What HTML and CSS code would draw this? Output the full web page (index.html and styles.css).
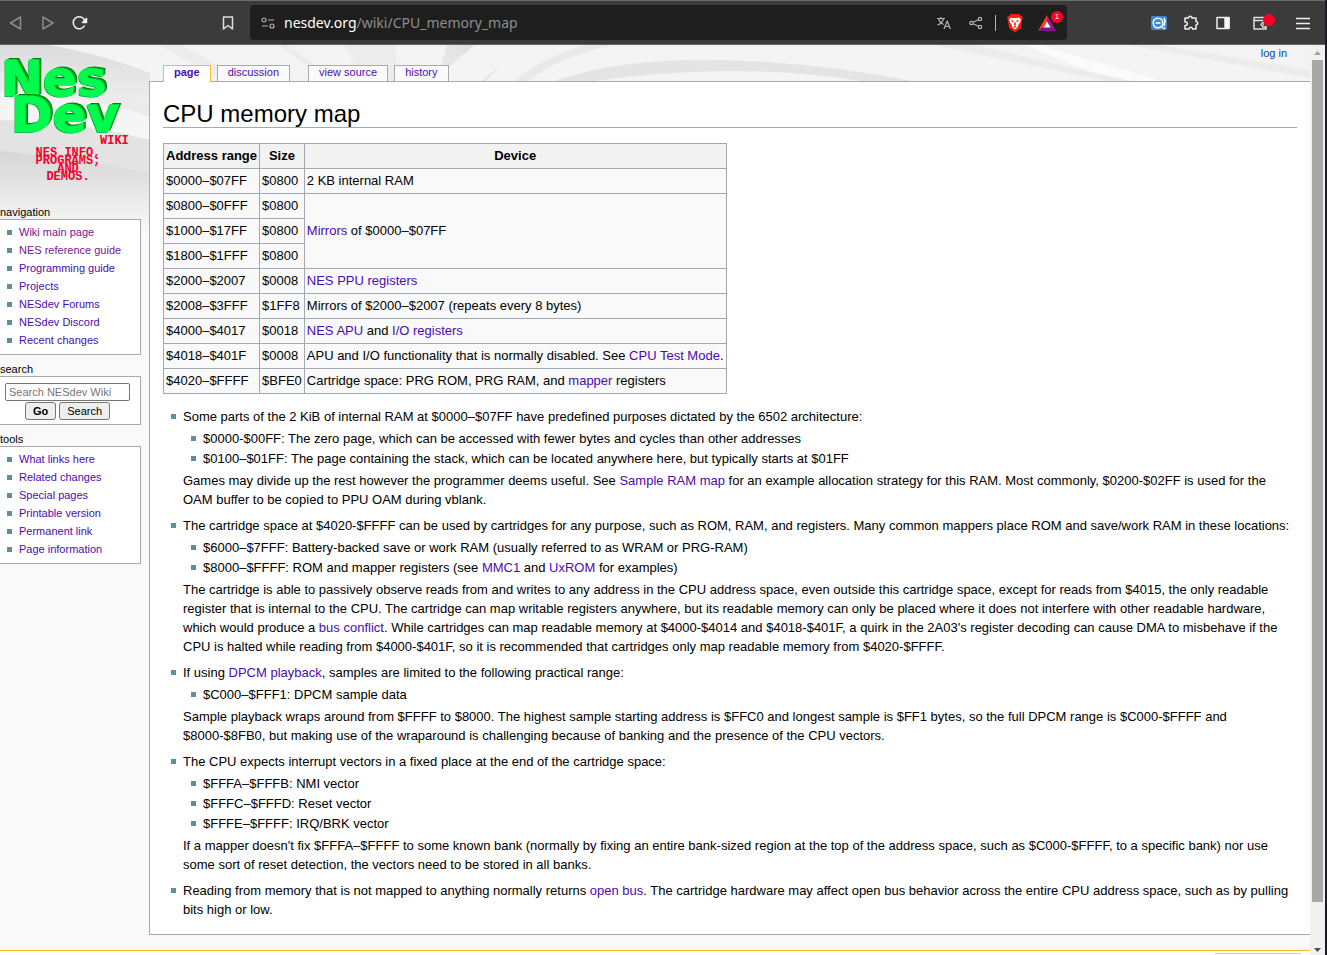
FILE: index.html
```html
<!DOCTYPE html>
<html lang="en">
<head>
<meta charset="utf-8">
<title>CPU memory map - NESdev Wiki</title>
<link rel="stylesheet" href="styles.css">
</head>
<body>
<div class="window">
  <header class="toolbar">
    <div class="tool-group">
      <button class="tool dim" aria-label="Back"><svg width="16" height="16" viewBox="0 0 16 16"><path d="M12.500 2v12L2.500 8z"/></svg></button>
      <button class="tool dim" aria-label="Forward"><svg width="16" height="16" viewBox="0 0 16 16"><path d="M3 2v12l10-6z"/></svg></button>
      <button class="tool bright" aria-label="Reload"><svg width="16" height="16" viewBox="0 0 16 16"><path d="M12.600 10.500A6 6 0 1 1 12.800 5.500"/><path fill="#f0f0f0" d="M14.500 3.500v4h-4z"/></svg></button>
    </div>
    <button class="tool bookmark" aria-label="Bookmark"><svg width="16" height="16" viewBox="0 0 16 16"><path d="M3.500 2h9v12L8 10.500 3.500 14z"/></svg></button>
    <div class="address">
      <svg class="site" width="14" height="14" viewBox="0 0 14 14"><circle cx="3" cy="4" r="2"/><circle cx="11" cy="10" r="2"/><path d="M7 4h6M1 10h6"/></svg>
      <a class="url" href="#">nesdev.org<span class="path">/wiki/CPU_memory_map</span></a>
      <button class="tool" aria-label="Translate"><svg width="16" height="16" viewBox="0 0 16 16"><path d="M1 3.500h8M5 2v1.500M2.500 4c1 3 3 4.500 5 5.500M7.500 4c-1 3-3 5-6 6M8 14l3.200-8 3.200 8M9 11.500h4.400"/></svg></button>
      <button class="tool" aria-label="Share"><svg width="14" height="14" viewBox="0 0 14 14"><circle cx="2.500" cy="7" r="1.700"/><circle cx="11" cy="3" r="1.700"/><circle cx="11" cy="11" r="1.700"/><path d="M4 6.300l5.400-2.600M4 7.700l5.400 2.600"/></svg></button>
      <span class="divider"></span>
      <button class="tool shield" aria-label="Brave Shields"><svg width="18" height="20" viewBox="0 0 18 20"><path fill="#fa1e0e" d="M5 1h8l2 2 2 1-1 4-1 7-6 4.500L3 15 2 8 1 4l2-1z"/><path fill="#fff" d="M5 4.500l2 .5h4l2-.500 2 2-1 3-1.500 2-1 3L9 16.500 6.500 14.500l-1-3L4 9.500l-1-3z"/><path fill="#fa1e0e" d="M5 7l3 1-1.500 1.500zM13 7l-3 1 1.500 1.500zM8.500 9h1l.5 3-1 1-1-1zM7 14l2-1 2 1-2 .700z"/></svg></button>
      <button class="tool rewards" aria-label="Rewards"><svg width="24" height="20" viewBox="0 0 24 20"><path fill="#ff3b21" d="M11 2L2 18l6-4 3-5z"/><path fill="#ad1289" d="M11 2l9 16-6-4-3-5z"/><path fill="#7a168c" d="M2 18h18l-5-4H7z"/><path fill="#fff" d="M11 8.500l3.500 6h-7z"/></svg><span class="count">1</span></button>
    </div>
    <div class="tool-group extensions">
      <button class="tool bright" aria-label="Extension"><svg width="16" height="14" viewBox="0 0 16 14"><rect width="16" height="14" rx="2" fill="#4288cf" stroke="none"/><circle cx="7" cy="7" r="4.800" fill="none" stroke="#fff"/><path d="M4.500 7h5M11 11l3 2M13 2l1 3-1 5" stroke="#fff"/></svg></button>
      <button class="tool bright" aria-label="Extensions"><svg width="16" height="16" viewBox="0 0 16 16"><path d="M2 3h3.500a1.700 1.700 0 1 1 3.400 0H13v3.500a1.700 1.700 0 1 1 0 3.400V14H9.500a1.700 1.700 0 1 0-3.400 0H2v-3.600a1.800 1.800 0 1 0 0-3.400z"/></svg></button>
      <button class="tool bright" aria-label="Sidebar"><svg width="14" height="14" viewBox="0 0 14 14"><rect x="1" y="1.500" width="12" height="11"/><path d="M9 2h4v10H9z" fill="#fff"/></svg></button>
      <button class="tool wallet" aria-label="Wallet"><svg width="24" height="20" viewBox="0 0 24 20"><path d="M15 7V4.500H3V16h12v-2M3 7.500H15M16 9.500h-4L10 11.500l2 2.500h4M12 11.500h1"/><circle cx="18" cy="7" r="6" fill="#ff0022" stroke="none"/></svg></button>
      <button class="tool bright menu" aria-label="Menu"><svg width="14" height="14" viewBox="0 0 14 14"><path d="M0 2.500h14M0 7.500h14M0 12.500h14"/></svg></button>
    </div>
  </header>

  <div class="viewport">
    <div class="page">
      <svg class="backdrop" width="1310" height="190" viewBox="0 0 1310 190" aria-hidden="true">
        <defs>
          <linearGradient id="fade" x1="0" y1="0" x2="0" y2="1"><stop offset="0" stop-color="#f3f3f3"/><stop offset="1" stop-color="#f9f9f9"/></linearGradient>
          <linearGradient id="low" x1="0" y1="0" x2="0" y2="1"><stop offset="0" stop-color="#d6d6d6"/><stop offset="1" stop-color="#f9f9f9"/></linearGradient>
          <linearGradient id="band" x1="0" y1="0" x2="0" y2="1"><stop offset="0" stop-color="#dcdcdc"/><stop offset="1" stop-color="#eeeeee"/></linearGradient>
          <linearGradient id="leaf" x1="0" y1="1" x2="1" y2="0"><stop offset="0" stop-color="#efefef"/><stop offset="1" stop-color="#dedede"/></linearGradient>
        </defs>
        <path fill="url(#fade)" d="M0 0h1310v190H0z"/>
        <path fill="url(#band)" d="M0 0h50q60 12 100 28v32Q70 30 0 28z"/>
        <path fill="#ebebeb" d="M0 28q90 6 150 32v12Q90 50 0 46z"/>
        <path fill="#e3e3e3" d="M0 75q80 2 150 20v42Q70 115 0 107z"/>
        <path fill="url(#low)" d="M0 106q80 8 150 22v62H0z"/>
        <path fill="#ececec" d="M160 0h20l70 37h-25zM345 0h50l3 37h-35zM280 0h8l50 37h-12z"/>
        <path fill="url(#leaf)" d="M447 0h27l-26 23-12 14z"/>
        <path fill="#e9e9e9" d="M585 0h25q-55 14-83 37h-14Q545 11 585 0z"/>
        <path fill="#e0e0e0" d="M501 20l-16 16h-3z"/>
        <path fill="#e4e4e4" d="M552 37q60-22 150-22 105 0 215 22h-50q-130-22-280 0z"/>
        <path fill="#fbfbfb" d="M1025 0h15l125 37h-50z"/>
        <path fill="#ececec" d="M935 0h40l160 37h-25zM1130 0h30l150 25v8z"/>
      </svg>

      <aside class="sidebar">
        <a class="logo" href="#">
          <span class="word">Nes</span>
          <span class="word shifted">Dev</span>
          <span class="wiki">WIKI</span>
          <span class="tagline">NES INFO,<br>PROGRAMS;<br>AND<br>DEMOS.</span>
        </a>
        <nav class="portlet">
          <h2>navigation</h2>
          <ul class="box links">
            <li><a class="visited" href="#">Wiki main page</a></li>
            <li><a class="visited" href="#">NES reference guide</a></li>
            <li><a href="#">Programming guide</a></li>
            <li><a href="#">Projects</a></li>
            <li><a href="#">NESdev Forums</a></li>
            <li><a href="#">NESdev Discord</a></li>
            <li><a href="#">Recent changes</a></li>
          </ul>
        </nav>
        <section class="portlet">
          <h2><label for="search">search</label></h2>
          <form class="box search">
            <input id="search" type="text" placeholder="Search NESdev Wiki">
            <div class="actions"><button type="button" class="go">Go</button><button type="button">Search</button></div>
          </form>
        </section>
        <nav class="portlet">
          <h2>tools</h2>
          <ul class="box links">
            <li><a href="#">What links here</a></li>
            <li><a href="#">Related changes</a></li>
            <li><a href="#">Special pages</a></li>
            <li><a href="#">Printable version</a></li>
            <li><a href="#">Permanent link</a></li>
            <li><a href="#">Page information</a></li>
          </ul>
        </nav>
      </aside>

      <div class="column">
        <div class="personal"><a href="#">log in</a></div>
        <nav class="tabs">
          <a class="selected" href="#">page</a>
          <a href="#">discussion</a>
          <a class="views" href="#">view source</a>
          <a href="#">history</a>
        </nav>
        <main class="content">
          <h1>CPU memory map</h1>
          <table>
            <thead><tr><th>Address range</th><th>Size</th><th>Device</th></tr></thead>
            <tbody>
              <tr><td>$0000–$07FF</td><td>$0800</td><td>2 KB internal RAM</td></tr>
              <tr><td>$0800–$0FFF</td><td>$0800</td><td rowspan="3"><a href="#">Mirrors</a> of $0000–$07FF</td></tr>
              <tr><td>$1000–$17FF</td><td>$0800</td></tr>
              <tr><td>$1800–$1FFF</td><td>$0800</td></tr>
              <tr><td>$2000–$2007</td><td>$0008</td><td><a href="#">NES PPU registers</a></td></tr>
              <tr><td>$2008–$3FFF</td><td>$1FF8</td><td>Mirrors of $2000–$2007 (repeats every 8 bytes)</td></tr>
              <tr><td>$4000–$4017</td><td>$0018</td><td><a href="#">NES APU</a> and <a href="#">I/O registers</a></td></tr>
              <tr><td>$4018–$401F</td><td>$0008</td><td>APU and I/O functionality that is normally disabled. See <a href="#">CPU Test Mode</a>.</td></tr>
              <tr><td>$4020–$FFFF</td><td>$BFE0</td><td>Cartridge space: PRG ROM, PRG RAM, and <a href="#">mapper</a> registers</td></tr>
            </tbody>
          </table>
          <ul class="notes">
            <li>Some parts of the 2 KiB of internal RAM at $0000–$07FF have predefined purposes dictated by the 6502 architecture:
              <ul>
                <li>$0000-$00FF: The zero page, which can be accessed with fewer bytes and cycles than other addresses</li>
                <li>$0100–$01FF: The page containing the stack, which can be located anywhere here, but typically starts at $01FF</li>
              </ul>
              Games may divide up the rest however the programmer deems useful. See <a href="#">Sample RAM map</a> for an example allocation strategy for this RAM. Most commonly, $0200-$02FF is used for the OAM buffer to be copied to PPU OAM during vblank.</li>
            <li>The cartridge space at $4020-$FFFF can be used by cartridges for any purpose, such as ROM, RAM, and registers. Many common mappers place ROM and save/work RAM in these locations:
              <ul>
                <li>$6000–$7FFF: Battery-backed save or work RAM (usually referred to as WRAM or PRG-RAM)</li>
                <li>$8000–$FFFF: ROM and mapper registers (see <a href="#">MMC1</a> and <a href="#">UxROM</a> for examples)</li>
              </ul>
              The cartridge is able to passively observe reads from and writes to any address in the CPU address space, even outside this cartridge space, except for reads from $4015, the only readable register that is internal to the CPU. The cartridge can map writable registers anywhere, but its readable memory can only be placed where it does not interfere with other readable hardware, which would produce a <a href="#">bus conflict</a>. While cartridges can map readable memory at $4000-$4014 and $4018-$401F, a quirk in the 2A03's register decoding can cause DMA to misbehave if the CPU is halted while reading from $4000-$401F, so it is recommended that cartridges only map readable memory from $4020-$FFFF.</li>
            <li>If using <a href="#">DPCM playback</a>, samples are limited to the following practical range:
              <ul>
                <li>$C000–$FFF1: DPCM sample data</li>
              </ul>
              Sample playback wraps around from $FFFF to $8000. The highest sample starting address is $FFC0 and longest sample is $FF1 bytes, so the full DPCM range is $C000-$FFFF and $8000-$8FB0, but making use of the wraparound is challenging because of banking and the presence of the CPU vectors.</li>
            <li>The CPU expects interrupt vectors in a fixed place at the end of the cartridge space:
              <ul>
                <li>$FFFA–$FFFB: NMI vector</li>
                <li>$FFFC–$FFFD: Reset vector</li>
                <li>$FFFE–$FFFF: IRQ/BRK vector</li>
              </ul>
              If a mapper doesn't fix $FFFA–$FFFF to some known bank (normally by fixing an entire bank-sized region at the top of the address space, such as $C000-$FFFF, to a specific bank) nor use some sort of reset detection, the vectors need to be stored in all banks.</li>
            <li>Reading from memory that is not mapped to anything normally returns <a href="#">open bus</a>. The cartridge hardware may affect open bus behavior across the entire CPU address space, such as by pulling bits high or low.</li>
          </ul>
        </main>
      </div>
      <footer class="footer"><span class="badge"></span></footer>
    </div>
    <div class="scrollbar" aria-hidden="true">
      <svg width="15" height="15" viewBox="0 0 15 15"><path fill="#a3a3a3" d="M4 10h7L7.500 6z"/></svg>
      <span class="thumb"></span>
      <span class="rest"></span>
      <svg width="15" height="12" viewBox="0 0 15 12"><path fill="#505050" d="M4 5h7L7.500 9z"/></svg>
    </div>
  </div>
</div>
</body>
</html>
```

FILE: styles.css
```css
* { box-sizing: border-box; }

body {
  margin: 0;
  font-family: "Liberation Sans", Arial, sans-serif;
  font-size: 13px;
  line-height: 19px;
  color: #000;
}

a { color: #4b0bb0; text-decoration: none; }
a.visited { color: #7a1496; }
ul { list-style: none; margin: 0; padding: 0; }
button { font-family: inherit; }

.window {
  display: flex;
  flex-direction: column;
  height: 100vh;
  overflow: hidden;
  border-right: 2px solid #1c1c24;
}

/* Browser toolbar */
.toolbar {
  display: flex;
  align-items: center;
  flex: none;
  height: 45px;
  background: #3b3b3b;
  border-top: 1px solid #6a6d6c;
  border-bottom: 1px solid #636363;
}
.tool-group { display: flex; align-items: center; }
.tool {
  display: flex;
  align-items: center;
  justify-content: center;
  flex: none;
  width: 32px;
  height: 32px;
  padding: 0;
  border: 0;
  background: none;
}
.tool svg, .site { flex: none; fill: none; stroke: #b4b4b4; stroke-width: 1.2; stroke-linejoin: round; }
.tool.dim svg { stroke: #8c8c8c; stroke-width: 1.5; }
.tool.bright svg { stroke: #f0f0f0; stroke-width: 1.5; }
.tool.bookmark { margin: 0 6px 0 116px; }
.tool.bookmark svg { stroke: #ddd; stroke-width: 1.5; }
.address {
  display: flex;
  align-items: center;
  flex: 1;
  height: 35px;
  padding: 0 2px 0 11px;
  border-radius: 4px;
  background: #1e1e1e;
}
.url {
  flex: 1;
  margin-left: 9px;
  font: 14px/20px "Noto Sans", sans-serif;
  color: #fff;
}
.path { color: #8c8c8c; }
.divider { width: 1px; height: 16px; margin: 0 3px; background: #b4b4b4; }
.tool.shield svg, .tool.rewards svg { stroke: none; }
.rewards { position: relative; width: 34px; }
.count {
  position: absolute;
  top: 4px;
  right: 2px;
  width: 12px;
  height: 12px;
  border-radius: 6px;
  background: #ff0022;
  color: #fff;
  font-size: 8px;
  line-height: 12px;
}
.extensions { padding: 0 6px 0 76px; }
.wallet { width: 48px; }
.tool.wallet svg { stroke: #e0e0e0; stroke-width: 1.5; }

/* Page and scrollbar */
.viewport { display: flex; flex: 1; min-height: 0; }
.page {
  position: relative;
  display: grid;
  grid-template-columns: 149px 1fr;
  align-content: start;
  flex: 1;
  overflow: hidden;
  background: #f9f9f9;
}
.backdrop { position: absolute; top: 0; left: 0; }
.sidebar, .column { position: relative; }
.scrollbar {
  display: flex;
  flex-direction: column;
  width: 15px;
  background: #f1f1f1;
}
.scrollbar svg { flex: none; }
.thumb { flex: 842; margin: 0 2px; background: #a8a8a8; }
.rest { flex: 41; }

/* Sidebar */
.sidebar {
  display: flex;
  flex-direction: column;
  gap: 7px;
  font-size: 11px;
  line-height: 18px;
}
.logo {
  display: flex;
  flex-direction: column;
  height: 153px;
  padding-top: 16px;
  font-family: "DejaVu Sans", sans-serif;
  font-weight: bold;
}
.word {
  padding-left: 1px;
  font-size: 50px;
  line-height: 36px;
  color: #00fb4f;
  -webkit-text-stroke: 1px #00fb4f;
  text-shadow: 1px -1px #00b51f, 2px -1px #00b51f, 3px -2px #007d10, -1px 1px #009a25;
}
.shifted { padding-left: 11px; }
.wiki, .tagline {
  font-family: "Liberation Mono", monospace;
  font-size: 12px;
  color: #f5002e;
}
.wiki { padding-left: 100px; line-height: 16px; }
.tagline { width: 136px; line-height: 8px; text-align: center; }
.portlet h2 { margin: 0; font-size: 11px; font-weight: normal; line-height: 14px; }
.box {
  margin-right: 8px;
  border: 1px solid #aaa;
  border-left: 0;
  background: #fff;
}
.links { padding: 3px 0 5px; }
.links li {
  padding-left: 19px;
  background: linear-gradient(#5f8ea0, #5f8ea0) 7px 7px / 5px 5px no-repeat;
}
.search {
  display: flex;
  flex-direction: column;
  align-items: center;
  gap: 1px;
  padding: 6px 10px 4px 5px;
}
.search input {
  width: 125px;
  height: 18px;
  padding: 0 16px 0 3px;
  border: 1px solid #767676;
  border-radius: 2px;
  font: 11px "Liberation Sans", Arial, sans-serif;
}
.actions { display: flex; gap: 3px; }
.actions button {
  height: 18px;
  padding: 0 7px;
  border: 1px solid #767676;
  border-radius: 3px;
  background: #efefef;
  color: #000;
  font-size: 11px;
  line-height: 16px;
}
.actions .go { font-weight: bold; }

/* Header row above the article */
.personal {
  height: 20px;
  padding-right: 23px;
  font-size: 11px;
  line-height: 16px;
  text-align: right;
}
.personal a { color: #0645ad; }
.tabs {
  display: flex;
  gap: 6px;
  padding-left: 14px;
  font-size: 11px;
  line-height: 13px;
}
.tabs a {
  height: 16px;
  padding: 0 10px;
  border: 1px solid #aaa;
  border-bottom: 0;
  background: #fbfbfb;
}
.tabs .selected {
  height: 17px;
  margin-bottom: -1px;
  border-color: #fabd23;
  background: #fff;
  font-weight: bold;
  z-index: 1;
}
.tabs .views { margin-left: 12px; }

/* Article */
.content {
  padding: 15px 13px;
  border: 1px solid #aaa;
  border-right: 0;
  background: #fff;
}
h1 {
  margin: 0 0 15px;
  border-bottom: 1px solid #a2a9b1;
  font-size: 24px;
  font-weight: normal;
  line-height: 33px;
  height: 31px;
}
table {
  border-collapse: collapse;
  background: #f9f9f9;
}
th, td {
  padding: 3px 2px;
  border: 1px solid #a2a9b1;
  line-height: 18px;
  text-align: left;
}
th { background: #f2f2f2; text-align: center; }
.notes { margin-top: 13px; }
.notes li {
  padding-left: 20px;
  background: linear-gradient(#5f8ea0, #5f8ea0) 8px 7px / 5px 5px no-repeat;
}
.notes > li + li { margin-top: 7px; }
.notes ul { margin: 3px 0 2px; }
.notes ul li { padding-bottom: 1px; }

/* Footer */
.footer {
  position: relative;
  grid-column: 1 / -1;
  display: flex;
  justify-content: flex-end;
  height: 48px;
  margin-top: 15px;
  padding: 2px 8px;
  border-top: 1px solid #fabd23;
  background: #fff;
}
.badge {
  width: 88px;
  height: 31px;
  border: 1px solid #ccc;
  border-radius: 3px;
}
```
